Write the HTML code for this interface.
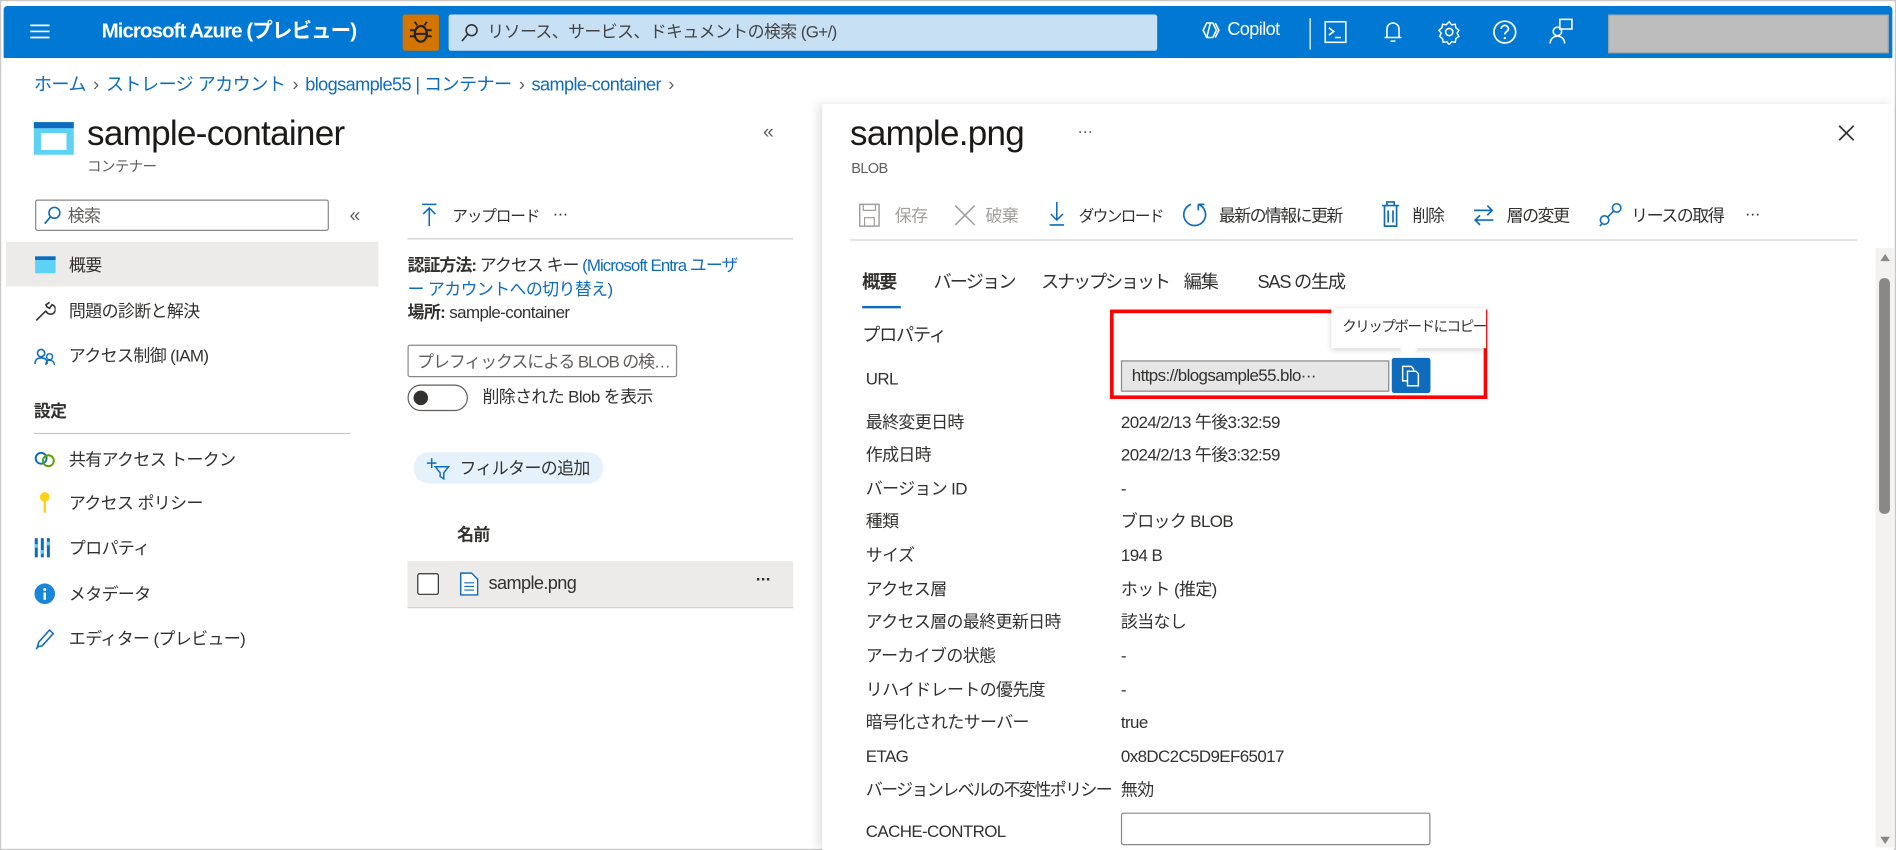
<!DOCTYPE html>
<html><head><meta charset="utf-8"><style>
html,body{margin:0;padding:0;width:1896px;height:849px;overflow:hidden;background:#fff}
#s{position:absolute;left:0;top:0;width:1568px;height:703px;transform:scale(1.20918);transform-origin:0 0;font-family:"Liberation Sans","Noto Sans CJK JP",sans-serif;color:#323130;font-size:14px;background:#fff}
.a{position:absolute;white-space:nowrap;line-height:18px;letter-spacing:-0.5px}
.lk{color:#0f6cbd}
.bc span{color:#605e5c;margin:0 6px}
svg{position:absolute}
</style></head><body><div id="s">
<div style="position:absolute;left:0;top:0;width:1566px;height:701px;border:1px solid #c8c8c8"></div>
<div style="position:absolute;left:3px;top:5px;width:1562px;height:43px;background:#0078d4;border-radius:3px 3px 0 0"></div>
<svg style="left:24px;top:19px" width="18" height="14"><path d="M1 2h16M1 7h16M1 12h16" stroke="#fff" stroke-width="1.4"/></svg>
<div class="a" style="left:84px;top:17px;color:#fff;font-weight:bold;font-size:17px;letter-spacing:-0.8px">Microsoft Azure (プレビュー)</div>
<div style="position:absolute;left:333px;top:12px;width:30px;height:30px;background:#d47500;border-radius:2px"></div>
<svg style="left:338px;top:16px" width="20" height="22"><ellipse cx="10" cy="12" rx="5" ry="6.5" fill="none" stroke="#222" stroke-width="1.8"/><path d="M5 9H1M15 9h4M5 14H1M15 14h4M7 5l-2-3M13 5l2-3M5 12h10" stroke="#222" stroke-width="1.6"/></svg>
<div style="position:absolute;left:371px;top:12px;width:586px;height:30px;background:#c7e0f4;border-radius:2px"></div>
<svg style="left:380px;top:19px" width="16" height="16"><circle cx="10" cy="6" r="4.5" fill="none" stroke="#333" stroke-width="1.3"/><path d="M7 9L2 15" stroke="#333" stroke-width="1.4"/></svg>
<div class="a" style="left:403px;top:17px;color:#444;font-size:14px">リソース、サービス、ドキュメントの検索 (G+/)</div>
<svg style="left:992px;top:16px" width="20" height="18"><path d="M6 3l-3 6 3 6h5l3-6-3-6zM9 3l-3 12M13 3l3 6-3 6" fill="none" stroke="#fff" stroke-width="1.3"/></svg>
<div class="a" style="left:1015px;top:16px;color:#fff;font-size:15px">Copilot</div>
<div style="position:absolute;left:1083px;top:15px;width:1px;height:26px;background:#fff"></div>
<svg style="left:1095px;top:17px" width="20" height="20"><rect x="1" y="1" width="17" height="17" fill="none" stroke="#fff" stroke-width="1.3"/><path d="M4 6l4 3-4 3M9 14h5" stroke="#fff" stroke-width="1.3" fill="none"/></svg>
<svg style="left:1143px;top:16px" width="18" height="21"><path d="M4 15V8a5 5 0 0110 0v7zM2 15h14M7 18h4" stroke="#fff" stroke-width="1.3" fill="none"/></svg>
<svg style="left:1188px;top:16px" width="21" height="21"><circle cx="10.5" cy="10.5" r="3" fill="none" stroke="#fff" stroke-width="1.3"/><path d="M10.5 2l2 2.5 3-.5.5 3 2.5 2-1.5 2.5 1.5 2.5-2.5 2-.5 3-3-.5-2 2.5-2-2.5-3 .5-.5-3-2.5-2 1.5-2.5L2 9l2.5-2 .5-3 3 .5z" fill="none" stroke="#fff" stroke-width="1.2"/></svg>
<svg style="left:1234px;top:16px" width="21" height="21"><circle cx="10.5" cy="10.5" r="9" fill="none" stroke="#fff" stroke-width="1.4"/><path d="M7.5 8a3 3 0 116 0c0 2-3 2-3 4.5" fill="none" stroke="#fff" stroke-width="1.4"/><circle cx="10.5" cy="15.5" r="1" fill="#fff"/></svg>
<svg style="left:1280px;top:15px" width="22" height="23"><rect x="10" y="1" width="10" height="8" fill="none" stroke="#fff" stroke-width="1.3"/><circle cx="8" cy="11" r="3.5" fill="none" stroke="#fff" stroke-width="1.3"/><path d="M2 21c0-4 3-6 6-6s6 2 6 6" fill="none" stroke="#fff" stroke-width="1.3"/></svg>
<div style="position:absolute;left:1330px;top:12px;width:232px;height:32px;background:#bdbdbd;border:1px solid #a8a8a8;box-sizing:border-box"></div>

<div class="a lk bc" style="left:28px;top:62px;font-size:15px;color:#0f6cbd">ホーム<span>›</span>ストレージ アカウント<span>›</span>blogsample55 | コンテナー<span>›</span>sample-container<span>›</span></div>

<!-- left -->
<div style="position:absolute;left:28px;top:101px;width:33px;height:27px;background:#5ed2f4;border-top:5px solid #0f6cbd;box-sizing:border-box"></div>
<div style="position:absolute;left:34px;top:110px;width:21px;height:14px;background:#fff"></div>
<div class="a" style="left:72px;top:94px;font-size:29px;line-height:34px;color:#1b1a19;letter-spacing:-0.6px">sample-container</div>
<div class="a" style="left:72px;top:129px;font-size:12px;color:#605e5c">コンテナー</div>
<div class="a" style="left:631px;top:101px;font-size:16px;color:#605e5c">«</div>
<div style="position:absolute;left:29px;top:165px;width:243px;height:26px;border:1px solid #8a8886;box-sizing:border-box;border-radius:2px"></div>
<svg style="left:35px;top:170px" width="16" height="16"><circle cx="10" cy="6" r="4.5" fill="none" stroke="#0f6cbd" stroke-width="1.3"/><path d="M7 9L2 15" stroke="#0f6cbd" stroke-width="1.4"/></svg>
<div class="a" style="left:56px;top:169px;color:#605e5c">検索</div>
<div class="a" style="left:289px;top:170px;font-size:16px;color:#605e5c">«</div>
<div style="position:absolute;left:5px;top:200px;width:308px;height:37px;background:#edebe9"></div>
<div style="position:absolute;left:29px;top:212px;width:17px;height:14px;background:#5ed2f4;border-top:3px solid #0f6cbd;box-sizing:border-box"></div>
<div class="a" style="left:57px;top:210px">概要</div>
<svg style="left:28px;top:249px" width="18" height="18"><path d="M2 16l8-8M10 8a4 4 0 105-5l-2 3-2-1-1-2 3-2" fill="none" stroke="#323130" stroke-width="1.3"/></svg>
<div class="a" style="left:57px;top:248px">問題の診断と解決</div>
<svg style="left:28px;top:286px" width="18" height="18"><circle cx="6" cy="6" r="3" fill="none" stroke="#0f6cbd" stroke-width="1.3"/><path d="M1 15c0-4 2-5 5-5s5 1 5 5" fill="none" stroke="#0f6cbd" stroke-width="1.3"/><circle cx="13" cy="9" r="2.5" fill="none" stroke="#0f6cbd" stroke-width="1.2"/><path d="M10 16c0-3 1-4 3-4s4 1 4 4" fill="none" stroke="#0f6cbd" stroke-width="1.2"/></svg>
<div class="a" style="left:57px;top:285px">アクセス制御 (IAM)</div>
<div class="a" style="left:28px;top:331px;font-weight:bold">設定</div>
<div style="position:absolute;left:28px;top:358px;width:262px;height:1px;background:#c8c6c4"></div>
<svg style="left:28px;top:372px" width="20" height="16"><circle cx="6" cy="7" r="4.5" fill="none" stroke="#0f6cbd" stroke-width="1.6"/><circle cx="12" cy="9" r="4.5" fill="none" stroke="#57a300" stroke-width="1.6"/></svg>
<div class="a" style="left:57px;top:371px">共有アクセス トークン</div>
<svg style="left:31px;top:406px" width="12" height="20"><circle cx="6" cy="5" r="4" fill="#fcd116"/><path d="M5 8h2v10H5z" fill="#fcd116"/></svg>
<div class="a" style="left:57px;top:407px">アクセス ポリシー</div>
<svg style="left:28px;top:444px" width="16" height="18"><path d="M2 1v16M7 1v16M12 1v16" stroke="#0f6cbd" stroke-width="2.5"/><path d="M2 6v3M7 11v3M12 4v3" stroke="#5ed2f4" stroke-width="2.5"/></svg>
<div class="a" style="left:57px;top:444px">プロパティ</div>
<svg style="left:28px;top:482px" width="18" height="18"><circle cx="9" cy="9" r="8.5" fill="#1a86d9"/><rect x="8" y="8" width="2" height="6" fill="#fff"/><circle cx="9" cy="5.5" r="1.2" fill="#fff"/></svg>
<div class="a" style="left:57px;top:482px">メタデータ</div>
<svg style="left:28px;top:519px" width="18" height="19"><path d="M3 16l1-4 9-10 3 3-9 10zM3 16l-1 2" fill="none" stroke="#0f6cbd" stroke-width="1.3"/></svg>
<div class="a" style="left:57px;top:519px">エディター (プレビュー)</div>

<!-- middle -->
<svg style="left:348px;top:168px" width="14" height="20"><path d="M1 1h12M7 4v15M2 9l5-5 5 5" fill="none" stroke="#0f6cbd" stroke-width="1.3"/></svg>
<div class="a" style="left:374px;top:170px;font-size:13px;letter-spacing:-1px">アップロード</div>
<div class="a" style="left:457px;top:167px;font-size:14px">···</div>
<div style="position:absolute;left:337px;top:197px;width:319px;height:1px;background:#d2d0ce"></div>
<div class="a" style="left:337px;top:210px;letter-spacing:-0.8px"><b>認証方法:</b> アクセス キー <span class="lk">(Microsoft Entra ユーザ</span></div>
<div class="a lk" style="left:337px;top:230px">ー アカウントへの切り替え)</div>
<div class="a" style="left:337px;top:249px"><b>場所:</b> sample-container</div>
<div style="position:absolute;left:337px;top:285px;width:223px;height:27px;border:1px solid #8a8886;box-sizing:border-box;border-radius:2px"></div>
<div class="a" style="left:345px;top:290px;color:#605e5c;width:210px;overflow:hidden;letter-spacing:-0.9px">プレフィックスによる BLOB の検…</div>
<div style="position:absolute;left:337px;top:318px;width:50px;height:22px;border:1px solid #605e5c;box-sizing:border-box;border-radius:11px"></div>
<div style="position:absolute;left:342px;top:323px;width:12px;height:12px;border-radius:6px;background:#323130"></div>
<div class="a" style="left:399px;top:319px">削除された Blob を表示</div>
<div style="position:absolute;left:342px;top:374px;width:157px;height:26px;border-radius:13px;background:#e5f1fb"></div>
<svg style="left:352px;top:378px" width="22" height="20"><path d="M5 1v8M1 5h8" stroke="#0f6cbd" stroke-width="1.3"/><path d="M8 8h11l-4 5v5l-3-2v-3z" fill="none" stroke="#0f6cbd" stroke-width="1.2"/></svg>
<div class="a" style="left:380px;top:378px">フィルターの追加</div>
<div class="a" style="left:378px;top:433px;font-weight:bold">名前</div>
<div style="position:absolute;left:337px;top:464px;width:319px;height:38px;background:#edebe9;border-bottom:1px solid #d2d0ce"></div>
<div style="position:absolute;left:345px;top:474px;width:18px;height:18px;border:1px solid #323130;box-sizing:border-box;border-radius:2px;background:#fff"></div>
<svg style="left:380px;top:473px" width="16" height="20"><path d="M1 1h9l5 5v13H1z" fill="#fff" stroke="#0f6cbd" stroke-width="1.2"/><path d="M4 9h8M4 12h8M4 15h8" stroke="#0f6cbd" stroke-width="1"/></svg>
<div class="a" style="left:404px;top:474px;font-size:15px">sample.png</div>
<div class="a" style="left:625px;top:470px;font-weight:bold">···</div>

<!-- right panel -->
<div style="position:absolute;left:680px;top:86px;width:886px;height:617px;background:#fff;box-shadow:-3px 0 8px rgba(0,0,0,.12)"></div>
<div class="a" style="left:703px;top:94px;font-size:29px;line-height:34px;color:#1b1a19;letter-spacing:-0.6px">sample.png</div>
<div class="a" style="left:891px;top:99px;color:#605e5c">···</div>
<div class="a" style="left:704px;top:130px;font-size:12px;color:#605e5c">BLOB</div>
<svg style="left:1519px;top:102px" width="16" height="16"><path d="M2 2l12 12M14 2L2 14" stroke="#323130" stroke-width="1.4"/></svg>

<svg style="left:710px;top:168px" width="18" height="20"><rect x="1" y="1" width="16" height="18" fill="none" stroke="#a19f9d" stroke-width="1.2"/><rect x="5" y="12" width="8" height="7" fill="none" stroke="#a19f9d"/><path d="M4 1v5h10V1" fill="none" stroke="#a19f9d"/></svg>
<div class="a" style="left:740px;top:169px;color:#a19f9d">保存</div>
<svg style="left:788px;top:168px" width="20" height="20"><path d="M2 2l16 16M18 2L2 18" stroke="#a19f9d" stroke-width="1.3"/></svg>
<div class="a" style="left:815px;top:169px;color:#a19f9d">破棄</div>
<svg style="left:867px;top:166px" width="14" height="22"><path d="M7 1v15M2 11l5 5 5-5M1 20h12" fill="none" stroke="#0f6cbd" stroke-width="1.3"/></svg>
<div class="a" style="left:892px;top:170px;font-size:13px;letter-spacing:-1.4px">ダウンロード</div>
<svg style="left:978px;top:166px" width="22" height="23"><path d="M7 3a9 9 0 106 0M13 3V8M13 3h5" fill="none" stroke="#0f6cbd" stroke-width="1.4"/></svg>
<div class="a" style="left:1008px;top:169px;letter-spacing:-1.3px">最新の情報に更新</div>
<svg style="left:1142px;top:166px" width="16" height="22"><path d="M1 4h14M5 4V1h6v3M3 4v17h10V4M6 8v10M10 8v10" fill="none" stroke="#0f6cbd" stroke-width="1.4"/></svg>
<div class="a" style="left:1168px;top:169px;letter-spacing:-1px">削除</div>
<svg style="left:1217px;top:168px" width="20" height="20"><path d="M2 6h15M13 2l4 4-4 4M18 14H3M7 10l-4 4 4 4" fill="none" stroke="#0f6cbd" stroke-width="1.4"/></svg>
<div class="a" style="left:1246px;top:169px;letter-spacing:-1.2px">層の変更</div>
<svg style="left:1321px;top:166px" width="22" height="22"><circle cx="16" cy="6" r="3.5" fill="none" stroke="#0f6cbd" stroke-width="1.3"/><circle cx="6" cy="16" r="3.5" fill="none" stroke="#0f6cbd" stroke-width="1.3"/><path d="M8 14l6-6M2 21l2-2" stroke="#0f6cbd" stroke-width="1.3"/></svg>
<div class="a" style="left:1349px;top:169px;letter-spacing:-1.2px">リースの取得</div>
<div class="a" style="left:1443px;top:167px">···</div>
<div style="position:absolute;left:703px;top:198px;width:833px;height:1px;background:#d2d0ce"></div>

<div class="a" style="left:713px;top:225px;font-weight:bold;font-size:15px;letter-spacing:-1px">概要</div>
<div style="position:absolute;left:713px;top:253px;width:32px;height:2px;background:#0f6cbd"></div>
<div class="a" style="left:772px;top:225px;font-size:15px;letter-spacing:-1.5px">バージョン</div>
<div class="a" style="left:861px;top:225px;font-size:15px;letter-spacing:-1.8px">スナップショット</div>
<div class="a" style="left:979px;top:225px;font-size:15px;letter-spacing:-1px">編集</div>
<div class="a" style="left:1040px;top:225px;font-size:15px;letter-spacing:-1px">SAS の生成</div>

<div class="a" style="left:713px;top:269px;font-size:15px;letter-spacing:-1px">プロパティ</div>
<div class="a" style="left:716px;top:304px">URL</div>
<div style="position:absolute;left:927px;top:298px;width:222px;height:26px;background:#e6e6e6;border:1px solid #8a8886;box-sizing:border-box"></div>
<div class="a" style="left:936px;top:301px;font-size:14px">https://blogsample55.blo···</div>
<div style="position:absolute;left:1151px;top:296px;width:32px;height:29px;background:#0f6cbd;border-radius:2px"></div>
<svg style="left:1158px;top:301px" width="18" height="20"><path d="M2 2h7l2 2v10H2z" fill="none" stroke="#fff" stroke-width="1.2"/><path d="M6 6h7l2 2v10H6z" fill="#0f6cbd" stroke="#fff" stroke-width="1.2"/></svg>
<div style="position:absolute;left:918px;top:256px;width:312px;height:74px;border:3px solid #ff0000;box-sizing:border-box"></div>
<div style="position:absolute;left:1101px;top:255px;width:128px;height:33px;background:#fff;box-shadow:0 1px 5px rgba(0,0,0,.2)"></div>
<div style="position:absolute;left:1160px;top:284px;width:10px;height:10px;background:#fff;transform:rotate(45deg)"></div>
<div class="a" style="left:1110px;top:261px;font-size:12px;letter-spacing:-1.2px">クリップボードにコピー</div>

<div class="a" style="left:716px;top:340px">最終変更日時</div><div class="a" style="left:927px;top:340px">2024/2/13 午後3:32:59</div>
<div class="a" style="left:716px;top:367px">作成日時</div><div class="a" style="left:927px;top:367px">2024/2/13 午後3:32:59</div>
<div class="a" style="left:716px;top:395px">バージョン ID</div><div class="a" style="left:927px;top:395px">-</div>
<div class="a" style="left:716px;top:422px">種類</div><div class="a" style="left:927px;top:422px">ブロック BLOB</div>
<div class="a" style="left:716px;top:450px">サイズ</div><div class="a" style="left:927px;top:450px">194 B</div>
<div class="a" style="left:716px;top:478px">アクセス層</div><div class="a" style="left:927px;top:478px">ホット (推定)</div>
<div class="a" style="left:716px;top:505px">アクセス層の最終更新日時</div><div class="a" style="left:927px;top:505px">該当なし</div>
<div class="a" style="left:716px;top:533px">アーカイブの状態</div><div class="a" style="left:927px;top:533px">-</div>
<div class="a" style="left:716px;top:561px">リハイドレートの優先度</div><div class="a" style="left:927px;top:561px">-</div>
<div class="a" style="left:716px;top:588px">暗号化されたサーバー</div><div class="a" style="left:927px;top:588px">true</div>
<div class="a" style="left:716px;top:616px">ETAG</div><div class="a" style="left:927px;top:616px">0x8DC2C5D9EF65017</div>
<div class="a" style="left:716px;top:644px;letter-spacing:-1.3px">バージョンレベルの不変性ポリシー</div><div class="a" style="left:927px;top:644px">無効</div>
<div class="a" style="left:716px;top:678px">CACHE-CONTROL</div>
<div style="position:absolute;left:927px;top:672px;width:256px;height:27px;border:1px solid #8a8886;box-sizing:border-box;border-radius:2px"></div>

<div style="position:absolute;left:1551px;top:205px;width:15px;height:496px;background:#f3f2f1"></div>
<svg style="left:1554px;top:208px" width="10" height="10"><path d="M1 8L5 2l4 6z" fill="#8a8886"/></svg>
<div style="position:absolute;left:1554px;top:230px;width:9px;height:195px;background:#8a8886;border-radius:4px"></div>
<svg style="left:1554px;top:690px" width="10" height="10"><path d="M1 2l4 6 4-6z" fill="#8a8886"/></svg>
</div></body></html>
